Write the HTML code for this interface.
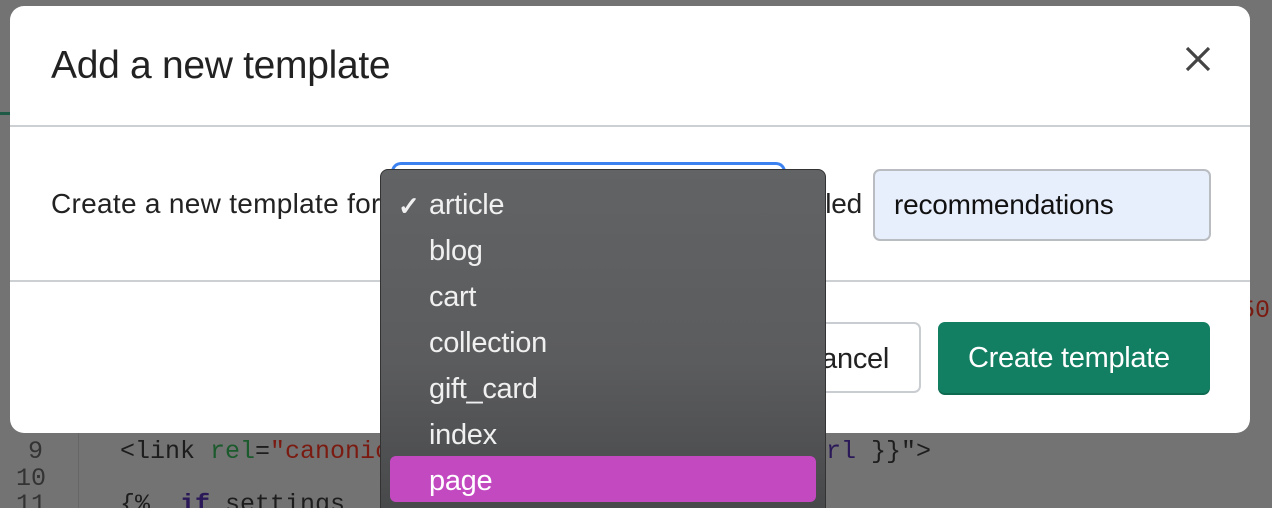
<!DOCTYPE html>
<html><head><style>
html,body{margin:0;width:1272px;height:508px;overflow:hidden}
body{background:#737373;position:relative;font-family:"Liberation Sans",sans-serif}
.abs{position:absolute}
.code{font-family:"Liberation Mono",monospace;font-size:25px;color:#1d1d1d;white-space:pre}
.modal{left:10px;top:6px;width:1240px;height:427px;background:#fff;border-radius:14px}
.item{position:absolute;left:48px;color:#f0f0f0;font-size:29px;letter-spacing:-0.3px}
</style></head><body>
<div class="abs" style="left:0;top:112px;width:10px;height:3px;background:#1f5a46"></div>
<div class="abs" style="left:78px;top:433px;width:1px;height:75px;background:#666"></div>
<div class="abs code" style="left:28px;top:437px;color:#333">9</div>
<div class="abs code" style="left:16px;top:464px;color:#333">10</div>
<div class="abs code" style="left:16px;top:490px;color:#333;height:18px;overflow:hidden">11</div>
<div class="abs code" style="left:120px;top:437px">&lt;link <span style="color:#1b5a2c">rel</span>=<span style="color:#7a1a10">"canonical"</span></div>
<div class="abs code" style="left:826px;top:437px"><span style="color:#2a1858">rl</span> }}"&gt;</div>
<div class="abs code" style="left:120px;top:490px;height:18px;overflow:hidden">{%  <span style="color:#2a1858;font-weight:bold">if</span> settings</div>
<div class="abs code" style="left:1240px;top:296px;color:#7a1a10">50</div>
<div class="abs modal">
  <div class="abs" style="left:41px;top:38px;font-size:39px;color:#222;letter-spacing:-0.3px">Add a new template</div>
  <svg class="abs" style="left:1175px;top:40px" width="26" height="26" viewBox="0 0 26 26"><path d="M2 2L24 24M24 2L2 24" stroke="#444" stroke-width="3.2"/></svg>
  <div class="abs" style="left:0;top:119px;width:1240px;height:2px;background:#cdd0d3"></div>
  <div class="abs" style="left:41px;top:182px;font-size:28px;color:#222;letter-spacing:0.3px;white-space:nowrap">Create a new template for</div>
  <div class="abs" style="left:381px;top:156px;width:389px;height:30px;border:3px solid #3b82f0;border-bottom:none;border-radius:10px 10px 0 0"></div>
  <div class="abs" style="right:388px;top:182px;font-size:28px;color:#222;letter-spacing:-0.2px">called</div>
  <div class="abs" style="left:863px;top:163px;width:334px;height:68px;background:#e8effc;border:2px solid #b9bdc1;border-radius:7px"><span class="abs" style="left:19px;top:18px;font-size:28px;color:#111;letter-spacing:-0.2px">recommendations</span></div>
  <div class="abs" style="left:0;top:274px;width:1240px;height:2px;background:#cdd0d3"></div>
  <div class="abs" style="left:700px;top:316px;width:207px;height:67px;border:2px solid #c9cdd1;border-radius:7px;background:#fff"><span class="abs" style="right:30px;top:19px;font-size:29px;color:#222;letter-spacing:-0.3px">Cancel</span></div>
  <div class="abs" style="left:928px;top:316px;width:272px;height:71px;background:#137f62;border-radius:7px;box-shadow:0 2px 0 #0d6a51"><span class="abs" style="left:30px;top:20px;font-size:29px;color:#fff;letter-spacing:-0.3px;white-space:nowrap">Create template</span></div>
</div>
<div class="abs" style="left:380px;top:169px;width:444px;height:345px;background:linear-gradient(#616365,#5b5c5e 55%,#474849);border:1px solid #333;border-radius:8px 8px 0 0;overflow:hidden">
  <div class="item" style="left:17px;font-weight:bold;font-size:26px;top:21px">✓</div>
  <div class="item" style="top:19px">article</div>
  <div class="item" style="top:65px">blog</div>
  <div class="item" style="top:111px">cart</div>
  <div class="item" style="top:157px">collection</div>
  <div class="item" style="top:203px">gift_card</div>
  <div class="item" style="top:249px">index</div>
  <div class="abs" style="left:9px;top:286px;width:426px;height:46px;background:#c349c1;border-radius:6px"></div>
  <div class="item" style="top:295px;color:#fff">page</div>
</div>
</body></html>
